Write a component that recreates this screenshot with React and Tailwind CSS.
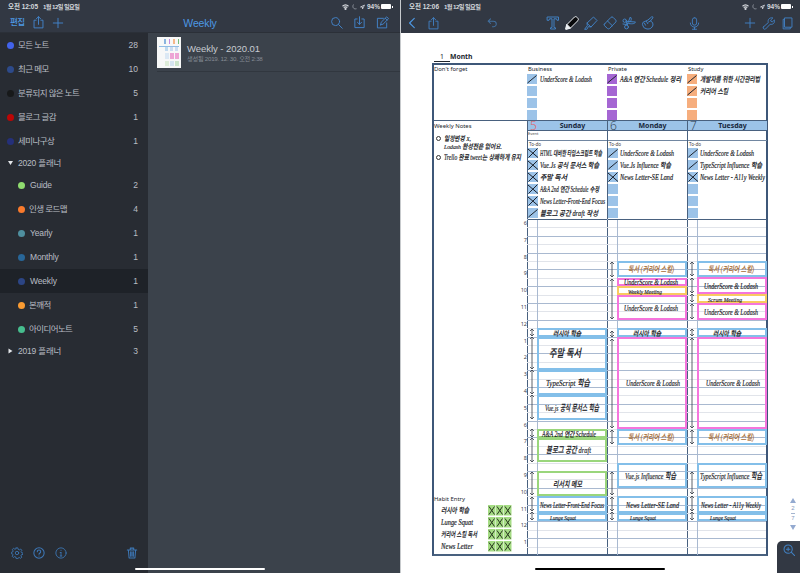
import React from "react";

const UI = "font-['Liberation_Sans','Noto_Sans_CJK_KR',sans-serif]";
const DOC = "font-['Noto_Sans','Open_Sans',sans-serif]";

/* A line of handwriting, stretched to the width it takes on the page. */
function Ink({ w, size = 8, color = "#15171c", children }) {
  return (
    <svg width={w} height="10" className="block shrink-0 overflow-visible font-['Liberation_Serif','Noto_Sans_CJK_KR',serif] font-medium italic">
      <text x="0" y="7.5" fontSize={size} fill={color} stroke={color} strokeWidth=".15" textLength={w} lengthAdjust="spacingAndGlyphs">{children}</text>
    </svg>
  );
}

function Icon({ size = 13, sw = 1, children, className = "", box = 14 }) {
  return (
    <svg width={size} height={size} viewBox={`0 0 ${box} ${box}`} fill="none" stroke="currentColor" strokeWidth={sw} strokeLinecap="round" strokeLinejoin="round" className={"block shrink-0 " + className}>
      {children}
    </svg>
  );
}

const Share = () => <Icon><path d="M4.500 4.500H2.200v8.300h9.600V4.500H9.500M7 9V.8M4.800 2.900 7 .7l2.200 2.200" /></Icon>;
const Plus = () => <Icon size={12} sw={1.1}><path d="M7 1.500v11M1.500 7h11" /></Icon>;

function Status({ time }) {
  return (
    <div className="flex h-[12px] items-end justify-between pl-2 pr-[7px] text-[6.5px] leading-[11px] font-bold text-[#d5d8dd]">
      <div className="flex h-[11px] gap-[5px] whitespace-nowrap">
        <span className="tracking-[-0.050px]">오전 {time}</span>
        <span className="text-[6.2px] tracking-[-0.6px]">1월 12일 일요일</span>
      </div>
      <div className="flex h-[11px] items-center gap-[3px]">
        <svg width="7" height="6" viewBox="0 0 14 11" fill="none" stroke="currentColor" strokeWidth="2.4"><path d="M1 4c4-3.600 8-3.600 12 0M3.400 6.800c2.300-2 4.900-2 7.200 0" /><circle cx="7" cy="9.300" r="1" /></svg>
        <svg width="5" height="6" viewBox="0 0 10 12" fill="none" stroke="#9fa5ae" strokeWidth="1.600"><path d="M3 1C0 6 3 11 9 9.500" /></svg>
        <svg width="5" height="6" viewBox="0 0 10 10" fill="none" stroke="currentColor" strokeWidth="1.500"><path d="M9 1 1 5h4v4z" /></svg>
        <span className="-ml-px">94%</span>
        <span className="-ml-[2px] h-[5px] w-[10px] rounded-[1px] bg-white" />
        <span className="-ml-[2px] h-[2px] w-px bg-white" />
      </div>
    </div>
  );
}

const notes = [
  ["모든 노트", 28, "#4263eb"],
  ["최근 메모", 10, "#2d4a8a"],
  ["분류되지 않은 노트", 5, "#17191a"],
  ["블로그 글감", 1, "#bb0606"],
  ["세미나구상", 1, "#25307a"],
];
const planner = [
  ["Guide", 2, "#8fdc6f"],
  ["인생 로드맵", 4, "#f97a2c"],
  ["Yearly", 1, "#4f8f9f"],
  ["Monthly", 1, "#286698"],
  ["Weekly", 1, "#2c4584"],
  ["본깨적", 1, "#f99b32"],
  ["아이디어노트", 5, "#46bd8e"],
];

function NoteRow({ item, nested }) {
  const [name, count, color] = item;
  const latin = /^[A-Z]/.test(name);
  return (
    <div className={"flex h-6 items-center pr-[10px] " + (nested ? "pl-[18px]" : "pl-[7px]") + (name === "Weekly" ? " bg-[#1e2228]" : "")}>
      <span className="mr-[5px] size-[7px] rounded-full" style={{ background: color }} />
      <span className={"flex-1 whitespace-nowrap " + (latin ? "tracking-[-0.150px]" : "-ml-px tracking-[-0.600px]")}>{name}</span>
      <span>{count}</span>
    </div>
  );
}

function Group({ name, open, count }) {
  return (
    <div className="flex h-5 items-center pl-2 pr-[10px]">
      <svg width="5" height="6" viewBox="0 0 5 6" fill="#e3e6ea" className="mr-[5px]"><path d={open ? "M0 1h5L2.500 5z" : "M.5.5v5L4.500 3z"} /></svg>
      <span className="flex-1 tracking-[-0.200px]">{name}</span>
      <span>{count}</span>
    </div>
  );
}

function Library() {
  return (
    <div className="flex w-[400px] flex-col bg-[#3b424b]">
      <header className="flex h-[33px] shrink-0 flex-col border-b border-[#2b3038] bg-[#323843]">
        <Status time="12:05" />
        <div className="grid flex-1 grid-cols-[1fr_auto_1fr] items-center pt-px text-[#4385cc]">
          <div className="flex items-center gap-[7px] pl-[10px] leading-none">
            <span className="text-[8.5px] font-medium tracking-[-0.5px] text-[#4d98e4]">편집</span>
            <Share />
            <Plus />
          </div>
          <span className="pt-px text-[10.5px] leading-none tracking-[-0.150px] text-[#4d98e4]">Weekly</span>
          <div className="flex items-center justify-end gap-[10px] pr-[11px]">
            <Icon><circle cx="6" cy="6" r="4.300" /><path d="m9.200 9.200 4 4" /></Icon>
            <Icon><path d="M4.500 3.200H2v9.300h10V3.200H9.500M7 .8v8M4.800 6.800 7 9l2.200-2.200" /></Icon>
            <Icon><path d="M8 2.500H1.500v10.300h10V7.500M5 9.500l.6-2.800L11.500.9l2 2-5.900 5.900L5 9.500ZM10 2.400l2 2" /></Icon>
          </div>
        </div>
      </header>
      <div className="flex flex-1">
        <aside className="flex w-[148px] flex-col bg-[#282c33] text-[8.5px] leading-none text-[#b9bdc4]">
          {notes.map((n) => <NoteRow key={n[0]} item={n} />)}
          <Group name="2020 플래너" open />
          {planner.map((n) => <NoteRow key={n[0]} item={n} nested />)}
          <Group name="2019 플래너" count={3} />
          <div className="mt-auto mb-[14px] flex items-center gap-[10px] pr-[10px] pl-[11px] text-[#3d78b8]">
            <Icon size={12}><circle cx="7" cy="7" r="2" /><path d="M6 1h2l.4 1.800 1.300.6 1.600-1 1.400 1.400-1 1.600.5 1.200 1.800.4v1.600l-1.800.4-.6 1.300 1 1.600-1.400 1.300-1.600-1-1.200.6L8 13.500H6l-.4-1.800-1.300-.5-1.600 1-1.300-1.400 1-1.600-.6-1.200L.4 7.800V6.200L2 5.800l.5-1.200-1-1.700L3 1.600l1.500 1 1.100-.4z" /></Icon>
            <Icon size={12} sw={1.200}><circle cx="7" cy="7" r="6" /><path d="M5 5.500C5 3 9 3 9 5.500 9 7 7 7 7 8.500M7 10.400v.1" /></Icon>
            <Icon size={12}><circle cx="7" cy="7" r="6" /><path d="M7 6.500v4M7 3.800v.2M6 10.500h2M6 6.500h1" /></Icon>
            <Icon size={12} sw={1.200} className="ml-auto"><path d="M1.500 3.500h11M5 3.200V1.300h4v1.900M2.800 3.800l.8 9h6.800l.8-9M5.400 5.500v5.300M7 5.500v5.300M8.600 5.500v5.300" /></Icon>
          </div>
        </aside>
        <main className="flex-1">
          <div className="ml-[9px] flex h-[39px] items-start border-b border-[#31373f] pt-1">
            <div className="flex h-[31px] w-[24px] flex-col gap-[2px] bg-[#f7f8f8] p-[2px]">
              <div className="flex h-[5px] gap-[3px] pl-[5px]"><i className="w-[2px] bg-[#8ab4de]" /><i className="w-[2px] bg-[#c38be0]" /><i className="w-[2px] bg-[#f4b78a]" /><i className="w-[2px] bg-[#75bd77]" /></div>
              <div className="flex h-[5px] gap-[2px] border-t border-[#91bce5] pl-[6px]"><i className="w-[3px] bg-[#bfd9ef]" /><i className="w-[3px] bg-[#cbdcf0]" /><i className="w-[3px] bg-[#cbdcf0]" /></div>
              <div className="flex h-[6px] gap-px pl-[6px]"><i className="w-[4px] bg-[#dbe8f4]" /><i className="w-[4px] bg-[#eda5d5]" /><i className="w-[4px] bg-[#eda5d5]" /></div>
              <div className="flex h-[5px] gap-px pl-[6px]"><i className="w-[4px] bg-[#ddecd9]" /><i className="w-[4px] bg-[#d5e4f1]" /><i className="w-[4px] bg-[#cbe4cb]" /></div>
            </div>
            <div className="ml-[6px] pt-[6px]">
              <div className="text-[9.500px] leading-[12px] tracking-[-0.050px] text-[#c7cbd1]">Weekly - 2020.01</div>
              <div className="text-[6.200px] leading-[8px] tracking-[-0.250px] whitespace-nowrap text-[#858b94]">생성됨 2019. 12. 30. 오전 2:38</div>
            </div>
          </div>
        </main>
      </div>
    </div>
  );
}

function Box({ color = "#9cc3e8", mark }) {
  return (
    <svg width="10" height="10" viewBox="0 0 10 10" className="block shrink-0">
      <rect width="10" height="10" fill={color} />
      {mark && <path d={mark === "x" ? "M0 1l10 8.500M9.500.5L.5 9.500" : "M.5 9 9.500 1.500"} stroke="#1b222c" strokeWidth="1" />}
    </svg>
  );
}

const topics = [
  { name: "Business", color: "#9cc3e8", lines: [["UnderScore & Lodash", 52]] },
  { name: "Private", color: "#a566d3", lines: [["A&A 연간 Schedule 정리", 61]] },
  { name: "Study", color: "#f6ae7e", lines: [["개발자를 위한 시간관리법", 60], ["커리어 스킬", 28]] },
];

const U = "UnderScore & Lodash";
const R = "독서 (커리어 스킬)";
const B = "#83bfe9", M = "#f575dc", Y = "#f8ca61", G = "#9ad67c", BR = "#a66c35";

const days = [
  {
    name: "Sunday", digit: "5", ink: "#e65858", event: true,
    todo: [["HTML 대비한 타입스크립트 학습", 62, "x"], ["Vue.Js 공식 문서스 학습", 59, "x"], ["주말 독서", 27, "x"], ["A&A 2nd 연간 Schedule 수정", 59, "x"], ["News Letter-Front-End Focus", 65, "x"], ["블로그 공간 draft 작성", 58, "/"]],
    blocks: [
      [328, 337, B, "러시아 학습", 28, 16, 7], [337, 370, B, "주말 독서", 32, 12, 11], [370, 395, B, "TypeScript 학습", 44, 9, 9], [395, 420, B, "Vue.js 공식 문서스 학습", 54, 8, 9],
      [429, 438, G, "A&A 2nd 연간 Schedule", 54, 5, 7.5], [438, 462, G, "블로그 공간 draft", 45, 9, 9], [471, 496, G, "리서치 메모", 29, 16, 8], [496, 513, B, "News Letter-Front-End Focus", 64, 3, 8], [513, 521, B, "Lunge Squat", 26, 13, 6.5],
    ],
    arrows: [[329, 336], [337, 369], [370, 394], [395, 419], [429, 437], [438, 462], [472, 495], [497, 511], [512, 520]],
  },
  {
    name: "Monday", digit: "6", ink: "#2c3a4b",
    todo: [[U, 54, "/"], ["Vue.Js Influence 학습", 51, "/"], ["News Letter-SE Land", 53, "x"], [], [], []],
    blocks: [
      [261, 277, B, R, 46, 11, 8, BR], [278, 286, M, U, 54, 7, 7.5], [286, 295, Y, "Weekly Meeting", 34, 11, 7], [295, 320, M, U, 54, 7],
      [328, 337, B, "러시아 학습", 28, 16, 7], [337, 429, M, U, 54, 9], [429, 445, B, R, 46, 11, 8, BR], [463, 488, B, "Vue.js Influence 학습", 51, 8, 9], [496, 513, B, "News Letter-SE Land", 53, 9], [513, 521, B, "Lunge Squat", 26, 13, 6.5],
    ],
    arrows: [[262, 277], [279, 319], [331, 337], [339, 428], [430, 444], [472, 495], [497, 511], [512, 520]],
  },
  {
    name: "Tuesday", digit: "7", ink: "#2c3a4b",
    todo: [[U, 54, "/"], ["TypeScript Influence 학습", 62, "/"], ["News Letter - A11y Weekly", 65, "x"], [], [], []],
    blocks: [
      [261, 277, B, R, 46, 11, 8, BR], [277, 294, M, U, 54, 7], [294, 303, Y, "Scrum Meeting", 34, 11, 7], [303, 320, M, U, 54, 7],
      [328, 337, B, "러시아 학습", 28, 16, 7], [337, 429, M, U, 54, 9], [429, 445, B, R, 46, 11, 8, BR], [463, 488, B, "TypeScript Influence 학습", 62, 3, 9], [496, 513, B, "News Letter - A11y Weekly", 60, 4], [513, 521, B, "Lunge Squat", 26, 13, 6.5],
    ],
    arrows: [[262, 276], [278, 293], [294, 302], [304, 319], [329, 336], [338, 428], [430, 444], [472, 494], [496, 511], [512, 520]],
  },
];

const hours = [6, 7, 8, 9, 10, 11, 12, 1, 2, 3, 4, 5, 6, 7, 8, 9, 10, 11, 12, 1];
const TOP = 220;

function Day({ day }) {
  return (
    <div className="flex w-20 shrink-0 flex-col border-l border-[#49617f]">
      <div className="flex h-[10px] items-center border-b border-[#49617f] bg-[#9cc3e8]">
        <span className="w-[11px] text-center font-['Open_Sans','Noto_Sans',sans-serif] text-[12px] leading-none font-light" style={{ color: day.ink }}>{day.digit}</span>
        <span className="flex-1 pr-[1px] text-center text-[7px] leading-none font-bold text-[#17263a]">{day.name}</span>
      </div>
      <div className="h-[10px] border-b border-[#7287a1] text-[4px] leading-[6px] text-[#444]">{day.event && "Event"}</div>
      <div className="h-[7px] pl-px text-[4.6px] leading-[6px] text-[#444]">To-do</div>
      <div className="flex h-[71px] flex-col justify-between pb-px">
        {day.todo.map(([t, w, mark], i) => (
          <div key={i} className="flex h-[10px] items-center gap-[2px]">
            <Box mark={mark} />
            {t && <Ink w={w} size={7.5}>{t}</Ink>}
          </div>
        ))}
      </div>
      <div className="relative h-[336px] border-t border-[#49617f]">
        <div className="absolute inset-y-0 left-[9px] w-px bg-[#a9b9d0]" />
        {day.blocks.map(([a, b, c, t, w, x, size = 8, ink], i) => (
          <div key={i} className="absolute left-[9px] flex w-[70px] items-center border-2" style={{ top: a - TOP, height: b - a, borderColor: c, paddingLeft: x - 2 }}>
            <Ink w={w} size={size} color={ink}>{t}</Ink>
          </div>
        ))}
        <svg width="9" height="336" className="absolute top-0 left-0 overflow-visible" fill="none" stroke="#343b45" strokeWidth=".8">
          {day.arrows.map(([a, b]) => (
            <path key={a} d={`M4 ${a - TOP}V${b - TOP}M2 ${a - TOP + 2}L4 ${a - TOP}l2 2M2 ${b - TOP - 2}L4 ${b - TOP}l2 -2`} />
          ))}
        </svg>
      </div>
    </div>
  );
}

function Bullet() {
  return <span className="mt-[3px] size-[5px] shrink-0 rounded-full border border-[#333]" />;
}

function HabitBox() {
  return (
    <svg width="8" height="11" viewBox="0 0 8 11"><rect width="7.500" height="10.500" fill="#a5dc84" /><path d="M1 1.500l5.500 8M6.500 1.500 1 9.500" stroke="#28381f" strokeWidth="1" /></svg>
  );
}

function Sheet() {
  return (
    <div className={"ml-[31px] w-[336px] pt-[19px] text-[#20252c] " + DOC}>
      <div className="flex h-[11px] items-center pl-[2px] text-[6.800px] leading-none font-bold">
        <span className="flex h-[9px] w-[16px] items-center justify-center border-b border-[#20252c] font-normal">1</span>
        <span>Month</span>
      </div>
      <div className="flex h-[493px] border-2 border-[#3e5778] border-b-[#49617f]">
        <div className="flex w-[93px] shrink-0 flex-col text-[5.900px]">
          <div className="h-[56px] border-b border-[#49617f] leading-[9px]">Don't forget</div>
          <div className="relative h-[374px] leading-[11px]">
            <div>Weekly Notes</div>
            <div className="flex flex-col pt-px pl-[2px]">
              <div className="flex h-[8px] items-start gap-[3px]"><Bullet /><Ink w={27} size={6.800}>일정변경 X,</Ink></div>
              <div className="h-[10px] pl-[8px]"><Ink w={58} size={6.800}>Lodash 완성전은 없어요.</Ink></div>
              <div className="mt-[1px] flex items-start gap-[3px]"><Bullet /><Ink w={77} size={7.500}>Trello 완료 tweet는 상쾌하게 유지</Ink></div>
            </div>
            <div className="absolute top-[98px] right-0 text-right text-[5.500px] leading-none text-[#39424e]">
              {hours.map((h, i) => <div key={i} className="flex h-[16.800px] items-start justify-end pt-[2px]">{h}</div>)}
            </div>
          </div>
          <div className="flex-1">
            <div className="h-[9px] leading-[9px]">Habit Entry</div>
            {[["러시아 학습", 28], ["Lunge Squat", 32], ["커리어 스킬 독서", 36], ["News Letter", 32]].map(([t, w]) => (
              <div key={t} className="flex h-[12px] items-center justify-between pr-[15px] pl-[7px]">
                <Ink w={w} size={7.500}>{t}</Ink>
                <div className="flex"><HabitBox /><HabitBox /><HabitBox /></div>
              </div>
            ))}
          </div>
        </div>
        <div className="flex w-[239px] shrink-0 flex-col">
          <div className="flex h-[56px] border-b border-[#49617f]">
            {topics.map((t) => (
              <div key={t.name} className="w-20 shrink-0">
                <div className="h-[9px] pl-px text-[5.800px] leading-[9px]">{t.name}</div>
                <div className="flex flex-col gap-[2px]">
                  {[0, 1, 2, 3].map((i) => (
                    <div key={i} className="flex h-[10px] items-center gap-[3px]">
                      <Box color={t.color} mark={t.lines[i] && "/"} />
                      {t.lines[i] && <Ink w={t.lines[i][1]} size={7.500}>{t.lines[i][0]}</Ink>}
                    </div>
                  ))}
                </div>
              </div>
            ))}
          </div>
          <div className="relative flex">
            <div className="absolute inset-x-0 top-[98px] h-[336px] bg-[repeating-linear-gradient(to_bottom,#a9b9d0_0px,#a9b9d0_1px,transparent_1px,transparent_8.400px,#e1e4ea_8.400px,#e1e4ea_9.400px,transparent_9.400px,transparent_16.800px)]" />
            {days.map((d) => <Day key={d.name} day={d} />)}
          </div>
        </div>
      </div>
    </div>
  );
}

function Editor() {
  return (
    <div className="relative flex w-[400px] flex-col border-l border-[#c7cacd] bg-white">
      <header className="flex h-[33px] shrink-0 flex-col bg-[#323843]">
        <Status time="12:06" />
        <div className="flex flex-1 items-center pt-px pr-[6px] pl-[6px] text-[#4180c2]">
          <Icon size={12} sw={1.300} className="text-[#4d98e4]"><path d="M8.500 1.500 3 7l5.500 5.500" /></Icon>
          <span className="ml-[8px]"><Share /></span>
          <Icon size={11} sw={1.300} className="ml-[47px] text-[#416f9e]"><path d="M4.500 1 1.500 4l3 3M1.500 4H8c5 0 5 7 .5 7H7" /></Icon>
          <div className="ml-[48px] flex items-center gap-[5px]">
            <Icon size={14}><path d="M1.500 1h11v3.300H11L10.500 2.800H8v8.700l1.500.3V13h-5v-1.200l1.500-.3V2.800H3.500L3 4.300H1.500z" /></Icon>
            <Icon size={14}><path d="M1 13l1-4.500L9.500 1C11-.5 14.500 3 13 4.500L5.500 12z" fill="#08090b" stroke="#edf0f4" /><path d="M2 8.500l3.500 3.500L1 13z" fill="#edf0f4" stroke="#edf0f4" /></Icon>
            <Icon size={14}><path d="M.8 13l2.500-3.300-.3-2.600L9.500 1l3.500 3.500-6 6.500-2.600-.4L3 13zM3 7.200l3.900 3.700" /></Icon>
            <Icon size={14}><path d="M1.500 8 8 1.300q1-.8 2 0l2.800 2.800q.8 1 0 1.900L6.500 12.500q-1 .8-2 0L1.500 9.700q-.8-.8 0-1.700zM4.500 5l4.800 4.700" /></Icon>
            <Icon size={14}><circle cx="2.700" cy="4.700" r="1.700" /><circle cx="4.500" cy="11" r="1.900" /><path d="M4.300 5.300l9.200.7c-.8 2-3.500 2.200-8.500 1.300M5 9.200 8.300 1c1.500 1.200 1.300 3-.3 5M1 8l3.500.5M4.400 6.300l1 2.800" /></Icon>
            <Icon size={14}><path d="M2.300 6.200 7 4l3.700-3.200q1.500-.4 1.200 1L9.500 5q3 1.200 2.500 4-1.300 4.500-6 4Q2 12.500 1.500 9zM5.500 5.500l1.300 2.200M3.500 7.200l1 2M9.500 5 7.500 6" /></Icon>
          </div>
          <Icon size={13} className="ml-[33px]"><rect x="4.700" y=".8" width="4.600" height="8" rx="2.300" /><path d="M2.500 6.500c0 6 9 6 9 0M7 11v2.200M4.800 13.200h4.400" /></Icon>
          <div className="ml-auto flex items-center gap-[6px]">
            <Plus />
            <Icon size={13}><path d="M1.500 10.700 6.800 6C5.800 2.500 8.500.2 11.700 1L9.300 3.300l.5 1.500 1.600.4L13.500 3c.8 3-1.700 5.600-4.700 4.800L3.800 13c-1.700.8-3.400-.9-2.300-2.300z" /></Icon>
            <Icon size={13}><path d="M4.200 1h7.600v10H4.200zM3.900 2.500H2.300v10.300H10v-1.500" /></Icon>
          </div>
        </div>
      </header>
      <Sheet />
      <div className="absolute top-[498px] left-[388px] flex w-2 flex-col items-center gap-[2px] text-[6px] text-[#8499bd]">
        <svg width="6" height="5" fill="#94aad0"><path d="M3 0 6 5H0z" /></svg>
        <div className="flex flex-col items-center leading-[7px]"><span>2</span><span className="my-px h-px w-1 bg-[#a5b5cf]" /><span>7</span></div>
        <svg width="6" height="5" className="mt-px" fill="#94aad0"><path d="M3 5 6 0H0z" /></svg>
      </div>
      <div className="absolute right-0 bottom-0 flex h-[32px] w-[23px] justify-center rounded-tl-[5px] bg-[#323843] pt-[3px] text-[#4180c2]">
        <Icon size={12} sw={1.200}><circle cx="6" cy="6" r="4.800" /><path d="m9.600 9.600 4 4M4 6h4M6 4v4" /></Icon>
      </div>
      <div className="absolute bottom-[3px] left-[134px] h-[2px] w-[130px] rounded-full bg-black" />
    </div>
  );
}

export default function App() {
  return (
    <div className={"relative flex h-[573px] w-[800px] overflow-hidden " + UI}>
      <Library />
      <Editor />
      <div className="absolute bottom-[3px] left-[135px] h-[2px] w-[130px] rounded-full bg-white" />
    </div>
  );
}
